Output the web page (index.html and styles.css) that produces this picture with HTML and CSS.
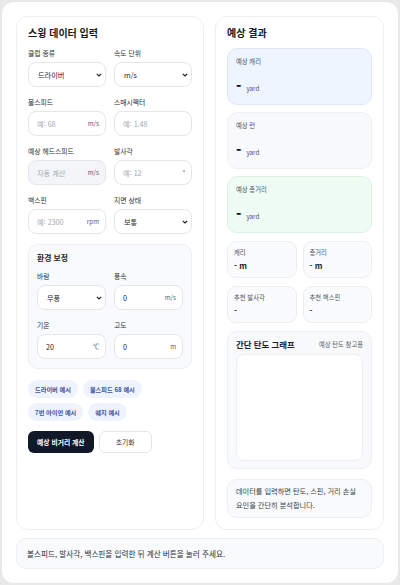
FILE: index.html
```html
<!DOCTYPE html>
<html lang="ko">
<head>
    <meta charset="UTF-8">
    <meta name="viewport" content="width=device-width, initial-scale=1.0">
    <title>스윙 비거리 계산기</title>
    <link rel="stylesheet" href="styles.css">
</head>
<body>
    <div class="page">
        <div class="layout">
            <section class="card">
                <h2>스윙 데이터 입력</h2>
                <div class="form-grid">
                    <div class="field">
                        <label>클럽 종류</label>
                        <div class="select-wrap">
                            <select id="club">
                                <option>드라이버</option>
                                <option>7번 아이언</option>
                                <option>웨지</option>
                            </select>
                            <svg class="chevron" width="6" height="4" viewBox="0 0 6 4"><path d="M0.8 0.8 L3 3 L5.2 0.8" fill="none" stroke="#222" stroke-width="1.2"/></svg>
                        </div>
                    </div>
                    <div class="field">
                        <label>속도 단위</label>
                        <div class="select-wrap">
                            <select id="unit">
                                <option>m/s</option>
                                <option>mph</option>
                            </select>
                            <svg class="chevron" width="6" height="4" viewBox="0 0 6 4"><path d="M0.8 0.8 L3 3 L5.2 0.8" fill="none" stroke="#222" stroke-width="1.2"/></svg>
                        </div>
                    </div>
                    <div class="field">
                        <label>볼스피드</label>
                        <div class="input-wrap">
                            <input type="text" placeholder="예: 68">
                            <span class="unit">m/s</span>
                        </div>
                    </div>
                    <div class="field">
                        <label>스매시팩터</label>
                        <div class="input-wrap">
                            <input type="text" placeholder="예: 1.48">
                        </div>
                    </div>
                    <div class="field">
                        <label>예상 헤드스피드</label>
                        <div class="input-wrap disabled">
                            <input type="text" placeholder="자동 계산" disabled>
                            <span class="unit">m/s</span>
                        </div>
                    </div>
                    <div class="field">
                        <label>발사각</label>
                        <div class="input-wrap">
                            <input type="text" placeholder="예: 12">
                            <span class="unit">°</span>
                        </div>
                    </div>
                    <div class="field">
                        <label>백스핀</label>
                        <div class="input-wrap">
                            <input type="text" placeholder="예: 2300">
                            <span class="unit">rpm</span>
                        </div>
                    </div>
                    <div class="field">
                        <label>지면 상태</label>
                        <div class="select-wrap">
                            <select id="ground">
                                <option>보통</option>
                                <option>딱딱함</option>
                                <option>젖음</option>
                            </select>
                            <svg class="chevron" width="6" height="4" viewBox="0 0 6 4"><path d="M0.8 0.8 L3 3 L5.2 0.8" fill="none" stroke="#222" stroke-width="1.2"/></svg>
                        </div>
                    </div>
                </div>

                <div class="env-box">
                    <h3>환경 보정</h3>
                    <div class="form-grid">
                        <div class="field">
                            <label>바람</label>
                            <div class="select-wrap">
                                <select id="wind">
                                    <option>무풍</option>
                                    <option>맞바람</option>
                                    <option>뒷바람</option>
                                </select>
                                <svg class="chevron" width="6" height="4" viewBox="0 0 6 4"><path d="M0.8 0.8 L3 3 L5.2 0.8" fill="none" stroke="#222" stroke-width="1.2"/></svg>
                            </div>
                        </div>
                        <div class="field">
                            <label>풍속</label>
                            <div class="input-wrap">
                                <input type="text" value="0">
                                <span class="unit">m/s</span>
                            </div>
                        </div>
                        <div class="field">
                            <label>기온</label>
                            <div class="input-wrap">
                                <input type="text" value="20">
                                <span class="unit">℃</span>
                            </div>
                        </div>
                        <div class="field">
                            <label>고도</label>
                            <div class="input-wrap">
                                <input type="text" value="0">
                                <span class="unit">m</span>
                            </div>
                        </div>
                    </div>
                </div>

                <div class="chips">
                    <button class="chip">드라이버 예시</button>
                    <button class="chip">볼스피드 68 예시</button>
                    <button class="chip">7번 아이언 예시</button>
                    <button class="chip">웨지 예시</button>
                </div>

                <div class="actions">
                    <button class="btn-primary">예상 비거리 계산</button>
                    <button class="btn-secondary">초기화</button>
                </div>
            </section>

            <section class="card">
                <h2>예상 결과</h2>
                <div class="result-box blue">
                    <div class="result-label">예상 캐리</div>
                    <div class="result-value"><strong>-</strong><span>yard</span></div>
                </div>
                <div class="result-box grey">
                    <div class="result-label">예상 런</div>
                    <div class="result-value"><strong>-</strong><span>yard</span></div>
                </div>
                <div class="result-box green">
                    <div class="result-label">예상 총거리</div>
                    <div class="result-value"><strong>-</strong><span>yard</span></div>
                </div>

                <div class="stat-grid">
                    <div class="stat">
                        <div class="stat-label">캐리</div>
                        <div class="stat-value">- m</div>
                    </div>
                    <div class="stat">
                        <div class="stat-label">총거리</div>
                        <div class="stat-value">- m</div>
                    </div>
                    <div class="stat">
                        <div class="stat-label">추천 발사각</div>
                        <div class="stat-value">-</div>
                    </div>
                    <div class="stat">
                        <div class="stat-label">추천 백스핀</div>
                        <div class="stat-value">-</div>
                    </div>
                </div>

                <div class="graph-box">
                    <div class="graph-head">
                        <h4>간단 탄도 그래프</h4>
                        <span>예상 탄도 참고용</span>
                    </div>
                    <div class="graph-canvas"></div>
                </div>

                <div class="note">데이터를 입력하면 탄도, 스핀, 거리 손실 요인을 간단히 분석합니다.</div>
            </section>
        </div>

        <div class="status">볼스피드, 발사각, 백스핀을 입력한 뒤 계산 버튼을 눌러 주세요.</div>
    </div>
</body>
</html>
```

FILE: styles.css
```css
* {
    box-sizing: border-box;
}
body {
    margin: 0;
    background-color: #e8e8e8;
    font-family: "Noto Sans CJK KR", "Noto Sans", sans-serif;
    color: #1f2328;
}
.page {
    margin: 2px;
    height: 581px;
    padding: 14px;
    background: #fff;
    border-radius: 12px;
}
.layout {
    display: grid;
    grid-template-columns: 188px minmax(0, 1fr);
    gap: 11px;
    height: 511px;
}
.card {
    min-width: 0;
    border: 1px solid #eceef1;
    border-radius: 12px;
    padding: 10px 11px 11px;
    background: #fff;
}
.card h2 {
    margin: 0 0 9px;
    font-size: 10px;
    line-height: 12px;
    font-weight: 700;
    color: #16181c;
}
.form-grid {
    display: grid;
    grid-template-columns: minmax(0, 1fr) minmax(0, 1fr);
    column-gap: 8px;
    row-gap: 10px;
}
.field {
    min-width: 0;
}
.field label {
    display: block;
    font-size: 6.8px;
    line-height: 10px;
    color: #2b2f36;
    margin-bottom: 4px;
}
.select-wrap {
    position: relative;
    height: 25px;
}
.select-wrap select {
    display: block;
    width: 100%;
    height: 25px;
    appearance: none;
    -webkit-appearance: none;
    border: 1px solid #e3e6ea;
    border-radius: 8px;
    background: #fff;
    padding: 0 14px 0 9px;
    font-family: inherit;
    font-size: 7.2px;
    color: #1f2328;
    outline: none;
}
.chevron {
    position: absolute;
    right: 4px;
    top: 11px;
}
.input-wrap {
    display: flex;
    align-items: center;
    height: 25px;
    border: 1px solid #e3e6ea;
    border-radius: 8px;
    background: #fff;
    padding: 0 6px 0 8px;
}
.input-wrap.disabled {
    background: #f3f5f8;
}
.input-wrap input {
    flex: 1;
    min-width: 0;
    width: 0;
    border: none;
    background: transparent;
    padding: 0;
    font-family: inherit;
    font-size: 7.2px;
    color: #1f2328;
    -webkit-text-fill-color: #1f2328;
    outline: none;
}
.input-wrap input::placeholder {
    color: #a3a8b0;
    -webkit-text-fill-color: #a3a8b0;
}
.unit {
    font-size: 6.3px;
    color: #5b6068;
}
.env-box {
    margin-top: 10px;
    border: 1px solid #eceff3;
    border-radius: 10px;
    background: #f8fafc;
    padding: 7px 8px 9px;
}
.env-box h3 {
    margin: 0 0 7px;
    font-size: 7.8px;
    line-height: 12px;
    font-weight: 700;
}
.chips {
    display: flex;
    flex-wrap: wrap;
    gap: 5px 5px;
    margin-top: 11px;
}
.chip {
    height: 18px;
    padding: 0 7px;
    border: none;
    border-radius: 9px;
    background: #eef3fd;
    color: #3c55a0;
    font-family: inherit;
    font-size: 6.2px;
    font-weight: 700;
}
.actions {
    display: flex;
    gap: 5px;
    margin-top: 10px;
}
.btn-primary {
    height: 22px;
    padding: 0 9px;
    border: none;
    border-radius: 6px;
    background: #111827;
    color: #fff;
    font-family: inherit;
    font-size: 6.8px;
    font-weight: 700;
}
.btn-secondary {
    height: 22px;
    width: 53px;
    border: 1px solid #e3e6ea;
    border-radius: 6px;
    background: #fff;
    color: #2b2f36;
    font-family: inherit;
    font-size: 6.8px;
}
.result-box {
    height: 57px;
    border: 1px solid #e7eaee;
    border-radius: 10px;
    padding: 8px 8px 0;
    margin-bottom: 7px;
}
.result-box.blue {
    background: #eff5ff;
    border-color: #dde7f7;
}
.result-box.grey {
    background: #f8f9fb;
    border-color: #eef0f3;
}
.result-box.green {
    background: #effcf3;
    border-color: #dcf3e3;
}
.result-label {
    font-size: 6.3px;
    line-height: 10px;
    color: #4f545c;
}
.result-value {
    display: flex;
    align-items: baseline;
    gap: 5px;
    height: 16px;
    margin-top: 10px;
    line-height: 16px;
}
.result-value strong {
    font-size: 14px;
    font-weight: 900;
    color: #111;
}
.result-value span {
    font-size: 6.3px;
    line-height: 8px;
    color: #4f545c;
}
.stat-grid {
    display: grid;
    grid-template-columns: minmax(0, 1fr) minmax(0, 1fr);
    gap: 8px 6px;
    margin-top: 8px;
}
.stat {
    border: 1px solid #eceef1;
    border-radius: 9px;
    background: #fafbfc;
    padding: 6px 6px 5px;
    height: 37px;
}
.stat-label {
    font-size: 6.3px;
    line-height: 10px;
    color: #4f545c;
}
.stat-value {
    margin-top: 2px;
    font-size: 8px;
    line-height: 11px;
    font-weight: 700;
}
.graph-box {
    margin-top: 8px;
    border: 1px solid #eceff3;
    border-radius: 10px;
    background: #f7f9fb;
    padding: 7px 8px 7px;
}
.graph-head {
    display: flex;
    justify-content: space-between;
    align-items: center;
}
.graph-head h4 {
    margin: 0;
    font-size: 8.4px;
    line-height: 11px;
    font-weight: 700;
}
.graph-head span {
    font-size: 6.3px;
    color: #5b6068;
}
.graph-canvas {
    margin-top: 4px;
    height: 107px;
    border: 1px solid #eceff3;
    border-radius: 8px;
    background: #fff;
}
.note {
    margin-top: 10px;
    border: 1px solid #eceff3;
    border-radius: 10px;
    background: #f8fafc;
    padding: 5px 7px 5px 8px;
    font-size: 7.2px;
    line-height: 13.5px;
    color: #3a3f46;
    word-break: keep-all;
}
.status {
    margin-top: 11px;
    height: 31px;
    display: flex;
    align-items: center;
    border: 1px solid #eceff3;
    border-radius: 10px;
    background: #f8fafc;
    padding: 0 10px;
    font-size: 7.6px;
    color: #2b2f36;
}
```
